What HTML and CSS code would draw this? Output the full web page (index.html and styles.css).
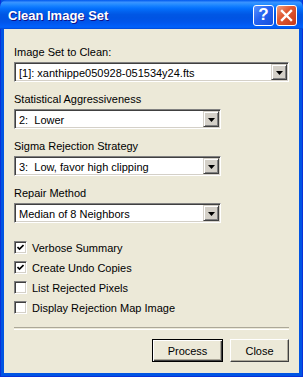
FILE: index.html
```html
<!DOCTYPE html>
<html lang="en">
<head>
    <meta charset="utf-8">
    <title>Clean Image Set</title>
    <link rel="stylesheet" href="styles.css">
</head>
<body>

    <div class="window">
        <div class="titlebar">
            <span class="title">Clean Image Set</span>
            <div class="caption-btns">
                <span class="cbtn help">?</span>
                <span class="cbtn close">
                    <svg width="13" height="13" viewBox="0 0 13 13"><path d="M2 2 L11 11 M11 2 L2 11" stroke="#fff" stroke-width="2.4" stroke-linecap="square"/></svg>
                </span>
            </div>
        </div>

        <div class="client">
            <div class="field">
                <div class="label">Image Set to Clean:</div>
                <div class="combo wide">
                    <span class="value">[1]: xanthippe050928-051534y24.fts</span>
                    <span class="drop"><svg width="7" height="4" viewBox="0 0 7 4"><polygon points="0,0 7,0 3.5,4" fill="#000"/></svg></span>
                </div>
            </div>
            <div class="field">
                <div class="label">Statistical Aggressiveness</div>
                <div class="combo">
                    <span class="value">2:&nbsp; Lower</span>
                    <span class="drop"><svg width="7" height="4" viewBox="0 0 7 4"><polygon points="0,0 7,0 3.5,4" fill="#000"/></svg></span>
                </div>
            </div>
            <div class="field">
                <div class="label">Sigma Rejection Strategy</div>
                <div class="combo">
                    <span class="value">3:&nbsp; Low, favor high clipping</span>
                    <span class="drop"><svg width="7" height="4" viewBox="0 0 7 4"><polygon points="0,0 7,0 3.5,4" fill="#000"/></svg></span>
                </div>
            </div>
            <div class="field">
                <div class="label">Repair Method</div>
                <div class="combo">
                    <span class="value">Median of 8 Neighbors</span>
                    <span class="drop"><svg width="7" height="4" viewBox="0 0 7 4"><polygon points="0,0 7,0 3.5,4" fill="#000"/></svg></span>
                </div>
            </div>

            <div class="checks">
                <div class="check">
                    <span class="box"><svg width="7" height="7" viewBox="0 0 7 7"><polyline points="0.5,3 2.5,5 6.5,1" fill="none" stroke="#000" stroke-width="1.6"/></svg></span>
                    <span>Verbose Summary</span>
                </div>
                <div class="check">
                    <span class="box"><svg width="7" height="7" viewBox="0 0 7 7"><polyline points="0.5,3 2.5,5 6.5,1" fill="none" stroke="#000" stroke-width="1.6"/></svg></span>
                    <span>Create Undo Copies</span>
                </div>
                <div class="check">
                    <span class="box"></span>
                    <span>List Rejected Pixels</span>
                </div>
                <div class="check">
                    <span class="box"></span>
                    <span>Display Rejection Map Image</span>
                </div>
            </div>

            <div class="sep"></div>

            <div class="buttons">
                <div class="btn default"><span>Process</span></div>
                <div class="btn close-btn"><span>Close</span></div>
            </div>
        </div>
    </div>

</body>
</html>
```

FILE: styles.css
```css
body{
    margin:0;
    background:#fff;
}
.window{
    width:303px;
    height:377px;
    box-sizing:border-box;
    background:#0054E3;
    border:1px solid #0831D9;
    border-top:none;
    display:flex;
    flex-direction:column;
    font:11px "Liberation Sans", Arial, sans-serif;
    color:#000;
}

/* title bar */
.titlebar{
    height:29px;
    margin:0 -1px;
    border-radius:7px 7px 0 0;
    background:linear-gradient(to bottom, #0058EE 0%, #3A93FF 8%, #288EFF 14%, #127DFF 22%, #036FFC 30%, #0262EE 40%, #0057E5 50%, #0054E3 62%, #0055EB 76%, #005BF5 86%, #0062FC 94%, #0046D5 100%);
    display:flex;
    align-items:center;
    padding:0 6px 0 8px;
}
.title{
    flex:1;
    color:#fff;
    font:bold 13px "Liberation Sans", Arial, sans-serif;
    text-shadow:1px 1px #0F1089;
    padding-top:1px;
}
.caption-btns{
    display:flex;
    gap:2px;
    padding-top:1px;
}
.cbtn{
    width:19px;
    height:19px;
    border:1px solid #fff;
    border-radius:3px;
    display:flex;
    align-items:center;
    justify-content:center;
    color:#fff;
}
.help{
    background:linear-gradient(135deg, #5A92FF 0%, #2663F0 45%, #1550DE 100%);
    font:bold 17px "Liberation Sans", Arial, sans-serif;
}
.close{
    background:linear-gradient(135deg, #F0A080 0%, #E15A33 40%, #C5381A 100%);
}

/* client area */
.client{
    flex:1;
    margin:0 3px 3px 3px;
    background:#ECE9D8;
    padding:17px 10px 0 10px;
    display:flex;
    flex-direction:column;
}
.field{
    margin-bottom:11px;
}
.label{
    line-height:13px;
    margin-bottom:3px;
}
.combo{
    width:207px;
    height:20px;
    box-sizing:border-box;
    background:#fff;
    border-top:1px solid #808080;
    border-left:1px solid #808080;
    border-right:1px solid #fff;
    border-bottom:1px solid #fff;
    box-shadow:inset 1px 1px #404040, inset -1px -1px #D4D0C8;
    display:flex;
    align-items:center;
    padding:1px 1px 1px 4px;
}
.combo.wide{
    width:275px;
}
.value{
    flex:1;
    white-space:nowrap;
    overflow:hidden;
    padding-top:1px;
}
.drop{
    width:16px;
    height:16px;
    box-sizing:border-box;
    background:#D4D0C8;
    border-top:1px solid #D4D0C8;
    border-left:1px solid #D4D0C8;
    border-right:1px solid #404040;
    border-bottom:1px solid #404040;
    box-shadow:inset 1px 1px #fff, inset -1px -1px #808080;
    display:flex;
    align-items:center;
    justify-content:center;
    padding-top:1px;
}

/* checkboxes */
.checks{
    margin-top:7px;
    display:flex;
    flex-direction:column;
    gap:7px;
}
.check{
    display:flex;
    align-items:center;
    height:13px;
}
.box{
    width:13px;
    height:13px;
    box-sizing:border-box;
    background:#fff;
    border-top:1px solid #808080;
    border-left:1px solid #808080;
    border-right:1px solid #fff;
    border-bottom:1px solid #fff;
    box-shadow:inset 1px 1px #404040, inset -1px -1px #D4D0C8;
    display:flex;
    align-items:center;
    justify-content:center;
    margin-right:5px;
}

.sep{
    height:1px;
    border-top:1px solid #ACA899;
    border-bottom:1px solid #fff;
    margin-top:13px;
}

.buttons{
    display:flex;
    justify-content:flex-end;
    gap:7px;
    margin-top:9px;
}
.btn{
    height:23px;
    box-sizing:border-box;
    background:#ECE9D8;
    border-top:1px solid #fff;
    border-left:1px solid #fff;
    border-right:1px solid #404040;
    border-bottom:1px solid #404040;
    box-shadow:inset -1px -1px #ACA899;
    display:flex;
    align-items:center;
    justify-content:center;
}
.btn.default{
    width:71px;
    border:1px solid #000;
    box-shadow:inset 1px 1px #fff, inset -1px -1px #404040, inset -2px -2px #ACA899;
}
.btn.close-btn{
    width:59px;
}
```
